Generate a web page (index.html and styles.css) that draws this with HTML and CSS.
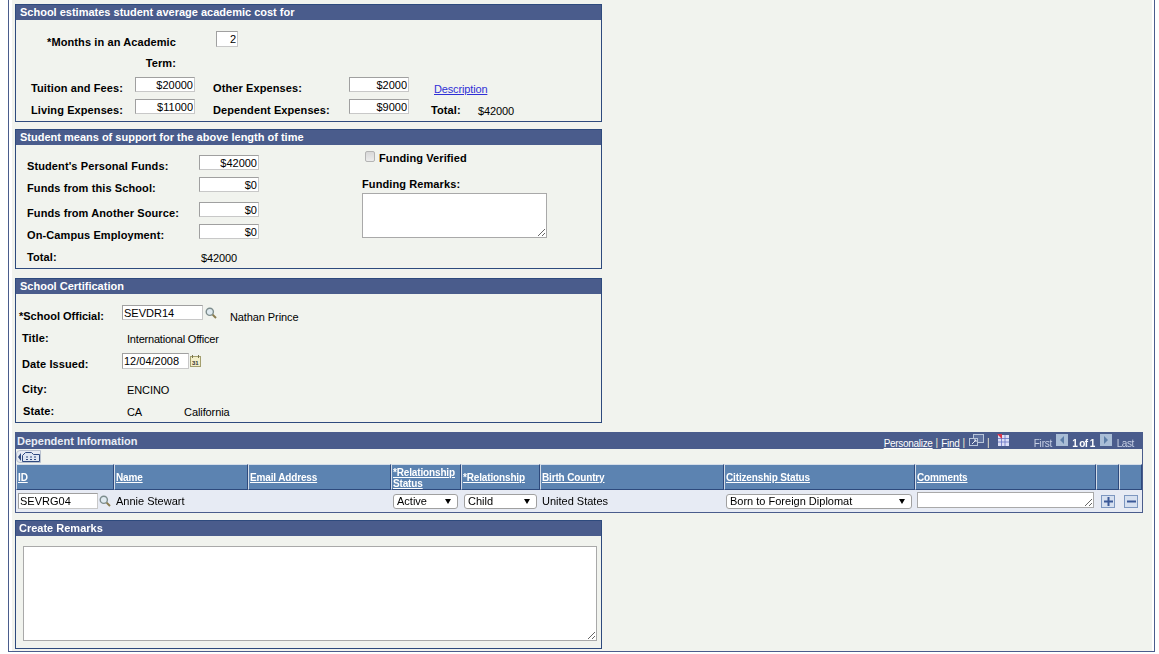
FILE: index.html
```html
<!DOCTYPE html>
<html lang="en">
<head>
<meta charset="utf-8">
<title>School Certification</title>
<link rel="stylesheet" href="styles.css">
</head>
<body>
<div class="frame">
  <section class="panel p1">
    <h2 class="panel-title">School estimates student average academic cost for</h2>
    <div class="form form-cost">
      <label class="lbl months">*Months in an Academic Term:</label>
      <input class="num months-in" value="2">
      <label class="lbl c1 r2">Tuition and Fees:</label>
      <input class="num c2 r2" value="$20000">
      <label class="lbl c4 r2">Other Expenses:</label>
      <input class="num c5 r2" value="$2000">
      <a class="desc" href="#">Description</a>
      <label class="lbl c1 r3">Living Expenses:</label>
      <input class="num c2 r3" value="$11000">
      <label class="lbl c4 r3">Dependent Expenses:</label>
      <input class="num c5 r3" value="$9000">
      <label class="lbl total-l">Total:</label>
      <span class="val total-v">$42000</span>
    </div>
  </section>

  <section class="panel p2">
    <h2 class="panel-title">Student means of support for the above length of time</h2>
    <div class="form form-support">
      <label class="lbl">Student's Personal Funds:</label>
      <input class="num" value="$42000">
      <div class="funding">
        <div class="verified"><input type="checkbox" class="check" disabled><span class="lbl">Funding Verified</span></div>
        <label class="lbl remarks-l">Funding Remarks:</label>
        <textarea class="remarks"></textarea>
      </div>
      <label class="lbl">Funds from this School:</label>
      <input class="num" value="$0">
      <label class="lbl">Funds from Another Source:</label>
      <input class="num" value="$0">
      <label class="lbl">On-Campus Employment:</label>
      <input class="num" value="$0">
      <label class="lbl">Total:</label>
      <span class="val sup-total">$42000</span>
    </div>
  </section>

  <section class="panel p3">
    <h2 class="panel-title">School Certification</h2>
    <div class="form form-cert">
      <label class="lbl off">*School Official:</label>
      <div class="fld">
        <input class="txt official" value="SEVDR14">
        <svg class="lookup" viewBox="0 0 12 12"><circle cx="4.800" cy="4.800" r="3.600" fill="#dfeaf0" stroke="#7d8d8d" stroke-width="1.400"/><path d="M7.600 7.600l3.400 3.400" stroke="#8a7d50" stroke-width="2"/></svg>
        <span class="val nm">Nathan Prince</span>
      </div>
      <label class="lbl in title-l">Title:</label>
      <span class="val v title-v">International Officer</span>
      <label class="lbl in date-l">Date Issued:</label>
      <div class="fld">
        <input class="txt date" value="12/04/2008">
        <svg class="cal" viewBox="0 0 11 12"><rect x=".5" y="1.500" width="10" height="10" fill="#f3efc9" stroke="#a49f6e"/><path d="M2.500 0v3M8.500 0v3" stroke="#77734c"/><text x="2" y="9.500" class="cal-t">31</text></svg>
      </div>
      <label class="lbl in">City:</label>
      <span class="val v">ENCINO</span>
      <label class="lbl st">State:</label>
      <span class="val v">CA<span class="state">California</span></span>
    </div>
  </section>

  <section class="dep">
    <div class="dep-title">
      <h2>Dependent Information</h2>
      <div class="dep-tools">
        <a href="#">Personalize</a><span class="sep">|</span><a href="#">Find</a><span class="sep">|</span>
        <svg class="ic-win" viewBox="0 0 15 13"><rect x="4.500" y=".5" width="10" height="8" fill="#5f729f" stroke="#b9c6da"/><rect x=".5" y="4.500" width="8" height="7" fill="#4a5c8c" stroke="#b9c6da"/><path d="M3 10l4-4M5 6h2v2" stroke="#e8edf5" fill="none"/></svg>
        <span class="sep">|</span>
        <svg class="ic-grid" viewBox="0 0 12 12"><rect x="1" y="1" width="11" height="11" fill="#dcdff6"/><path d="M1 4.500h11M1 8h11M4.500 1v11M8 1v11" stroke="#6671c4" stroke-width=".8"/><path d="M0 0h5v5z" fill="#d8344a"/></svg>
        <span class="first">First</span>
        <span class="nav nav-a"><i class="tri-l"></i></span>
        <b>1 of 1</b>
        <span class="nav nav-b"><i class="tri-r"></i></span>
        <span class="last">Last</span>
      </div>
    </div>
    <div class="dep-bar">
      <span class="tab-btn"><i class="tri-k"></i><svg viewBox="0 0 18 10"><path d="M.5 9.500v-6l3-3h6l2 2h6v7z" fill="#dfe6f2" stroke="#2f4a80"/><path d="M4 5h2M8 5h2M12 5h2M4 7.500h2M8 7.500h2M12 7.500h2" stroke="#2f4a80"/></svg></span>
    </div>
    <table class="grid">
      <colgroup>
        <col class="w1"><col class="w2"><col class="w3"><col class="w4"><col class="w5"><col class="w6"><col class="w7"><col class="w8"><col class="w9"><col class="w10">
      </colgroup>
      <thead>
        <tr>
          <th><a href="#">ID</a></th>
          <th><a href="#">Name</a></th>
          <th><a href="#">Email Address</a></th>
          <th><a href="#">*Relationship Status</a></th>
          <th><a href="#">*Relationship</a></th>
          <th><a href="#">Birth Country</a></th>
          <th><a href="#">Citizenship Status</a></th>
          <th><a href="#">Comments</a></th>
          <th></th>
          <th></th>
        </tr>
      </thead>
      <tbody>
        <tr>
          <td><div class="fld"><input class="txt depid" value="SEVRG04"><svg class="lookup" viewBox="0 0 12 12"><circle cx="4.800" cy="4.800" r="3.600" fill="#dfeaf0" stroke="#7d8d8d" stroke-width="1.400"/><path d="M7.600 7.600l3.400 3.400" stroke="#8a7d50" stroke-width="2"/></svg></div></td>
          <td>Annie Stewart</td>
          <td></td>
          <td><div class="sel s1">Active<i class="tri-d"></i></div></td>
          <td><div class="sel s2">Child<i class="tri-d"></i></div></td>
          <td>United States</td>
          <td><div class="sel s3">Born to Foreign Diplomat<i class="tri-d"></i></div></td>
          <td><textarea class="cmt"></textarea></td>
          <td class="act"><span class="btn"><svg viewBox="0 0 9 9"><path d="M4.500 0v9M0 4.500h9" stroke="#3b5998" stroke-width="2"/></svg></span></td>
          <td class="act"><span class="btn"><svg viewBox="0 0 9 9"><path d="M0 4.500h9" stroke="#3b5998" stroke-width="2"/></svg></span></td>
        </tr>
      </tbody>
    </table>
  </section>

  <section class="panel p4">
    <h2 class="panel-title t4">Create Remarks</h2>
    <div class="rem-body"><textarea class="rem"></textarea></div>
  </section>
</div>
</body>
</html>
```
FILE: styles.css
```css
* { box-sizing: border-box; }
html, body { margin: 0; padding: 0; background: #fff; }
body { font-family: "Liberation Sans", Arial, sans-serif; font-size: 11px; color: #000; }
.frame { width: 1147px; height: 652px; margin-left: 8px; padding: 4px 0 0 6px; background: #f1f3ee; border: 1px solid #4a5c8c; border-top: 0; overflow: hidden; box-shadow: inset 3px 0 0 #fff, inset -2px 0 0 #fff; }
.panel { width: 587px; border: 1px solid #2e4a7d; }
.panel-title { margin: 0; height: 15px; padding-left: 4px; background: #4a5c8c; color: #fff; font-size: 11px; font-weight: bold; line-height: 15px; }
.p1 { height: 118px; }
.p2 { margin-top: 7px; height: 140px; }
.p3 { margin-top: 9px; height: 145px; }
.p4 { margin-top: 7px; height: 129px; }
.form { display: grid; }
.lbl { font-weight: bold; font-size: 11px; letter-spacing: .1px; color: #000; }
.val { font-size: 11px; letter-spacing: -.1px; color: #000; }
.num, .txt { height: 15px; padding: 0 1px; border: 1px solid; border-color: #a0a0a0 #c8c8c8 #c8c8c8 #a0a0a0; background: #fff; font: 11px "Liberation Sans", Arial, sans-serif; color: #000; border-radius: 0; outline: 0; }
.num { width: 60px; text-align: right; }
textarea { display: block; resize: both; border: 1px solid #a9a9a9; background: #fff; margin: 0; padding: 0; }

.form-cost { grid-template-columns: 104px 60px 18px 136px 60px 22px 47px 1fr; grid-template-rows: 46px 22px 15px; padding: 11px 0 0 15px; align-items: center; }
.months { grid-column: 1 / 3; grid-row: 1; align-self: start; justify-self: end; width: 130px; margin: 1px 19px 0 0; text-align: right; line-height: 21px; }
.months-in { grid-column: 3 / 5; grid-row: 1; align-self: start; margin-left: 21px; width: 22px; height: 16px; }
.c1 { grid-column: 1; } .c2 { grid-column: 2; } .c4 { grid-column: 4; } .c5 { grid-column: 5; }
.r2 { grid-row: 2; align-self: start; } .r3 { grid-row: 3; align-self: start; }
.lbl.r2, .lbl.r3 { margin-top: 5px; }
.desc { grid-column: 7 / 9; grid-row: 2; align-self: start; margin: 6px 0 0 3px; color: #2f2fd6; letter-spacing: -.15px; }
.total-l { grid-column: 7; grid-row: 3; align-self: start; margin-top: 5px; }
.total-v { grid-column: 8; grid-row: 3; align-self: start; margin-top: 6px; }

.form-support { grid-template-columns: 172px 60px 103px 1fr; grid-template-rows: 22px 25px 22px 22px 15px; padding: 10px 0 0 11px; }
.form-support > .lbl { grid-column: 1; margin-top: 5px; }
.form-support > .num { grid-column: 2; }
.sup-total { grid-column: 2; margin: 6px 0 0 2px; }
.funding { grid-column: 4; grid-row: 1 / 6; margin-top: -3px; display: flex; flex-direction: column; align-items: flex-start; }
.verified { display: flex; align-items: center; height: 12px; gap: 4px; padding-left: 3px; }
.check { appearance: none; width: 10px; height: 11px; margin: -3px 0 0; border: 1px solid #b4b4b4; border-radius: 2px; background: linear-gradient(#d8d8d8, #ececec); }
.remarks-l { margin-top: 13px; line-height: 14px; }
.remarks { width: 185px; height: 45px; margin-top: 2px; }

.form-cert { grid-template-columns: 103px 1fr; grid-template-rows: 26px 22px 27px 22px 22px; padding: 11px 0 0 3px; align-items: start; }
.fld { display: flex; align-items: flex-start; }
.off { margin-top: 5px; letter-spacing: 0; }
.in { margin: 3px 0 0 3px; }
.title-l { margin-top: 1px; }
.date-l { margin-top: 5px; }
.st { margin: 3px 0 0 4px; }
.v { margin: 4px 0 0 5px; }
.title-v { margin-top: 2px; letter-spacing: -.2px; }
.official { width: 81px; }
.lookup { width: 12px; height: 12px; margin: 2px 0 0 2px; flex: none; }
.nm { margin: 6px 0 0 13px; }
.date { width: 67px; height: 16px; }
.cal { width: 11px; height: 12px; margin: 2px 0 0 1px; }
.cal-t { font: bold 6px "Liberation Sans", Arial, sans-serif; fill: #333; }
.state { margin-left: 42px; }

.dep { width: 1128px; margin-top: 9px; height: 81px; border: 1px solid #4a5c8c; border-top: 0; }
.dep-title { height: 17px; background: #4a5c8c; color: #fff; display: flex; justify-content: space-between; padding-left: 1px; }
.dep-title h2 { margin: 0; font-size: 11px; font-weight: bold; line-height: 19px; color: #e8edf5; }
.dep-tools { display: flex; align-items: flex-start; font-size: 10px; line-height: 13px; padding-top: 5px; padding-right: 8px; color: #c7d0e4; }
.dep-tools a { color: #fff; letter-spacing: -.3px; }
.dep-tools .sep { margin: -1px 3px 0; color: #f2ead0; }
.dep-tools b { color: #fff; margin: 0 5px 0 4px; letter-spacing: -.6px; }
.ic-win { width: 15px; height: 13px; margin: -3px 0 0 1px; }
.ic-grid { width: 12px; height: 12px; margin: -3px 0 0 4px; }
.first { margin-left: 25px; letter-spacing: -.2px; }
.last { margin-left: 5px; letter-spacing: -.4px; }
.nav { width: 12px; height: 12px; margin: -3px 0 0 4px; background: #a9bdd6; display: flex; align-items: center; justify-content: center; }
.nav-b { margin-left: 0; }
.tri-l, .tri-r, .tri-k { width: 0; height: 0; border: 4px solid transparent; }
.tri-l { border-right-color: #5d7ea8; border-left-width: 0; }
.tri-r { border-left-color: #5d7ea8; border-right-width: 0; }
.dep-bar { height: 15px; display: flex; align-items: center; }
.tab-btn { display: flex; align-items: center; width: 25px; height: 13px; background: #e6eaf2; border: 1px solid #b8c0ce; border-radius: 4px 0 0 4px; }
.tri-k { border-right-color: #2f4a80; border-width: 4px 3px 4px 0; margin: 0 1px 0 1px; }
.tab-btn svg { width: 18px; height: 10px; }

.grid { border-collapse: separate; border-spacing: 0; table-layout: fixed; width: 1126px; }
.w1 { width: 98px; } .w2 { width: 134px; } .w3 { width: 143px; } .w4 { width: 70px; } .w5 { width: 79px; }
.w6 { width: 184px; } .w7 { width: 191px; } .w8 { width: 181px; } .w9 { width: 23px; } .w10 { width: 23px; }
.grid th { height: 26px; padding: 1px 0 0 1px; background: #5c83b1; border-left: 1px solid #d5dde8; border-top: 1px solid #d5dde8; border-bottom: 1px solid #2e4a7d; border-right: 1px solid #2e4a7d; text-align: left; font-size: 10px; letter-spacing: -.15px; line-height: 11px; font-weight: bold; }
.grid th a { color: #fff; }
.grid td { height: 22px; padding: 0 0 0 2px; background: #e7ebf4; font-size: 11px; vertical-align: middle; }
.depid { width: 80px; height: 16px; }
.grid .lookup { margin: 2px 0 0 1px; }
.sel { position: relative; height: 15px; border: 1px solid #a0a0a0; border-radius: 3px; background: #fff; padding-left: 3px; line-height: 13px; font-size: 11px; }
.s1 { width: 65px; } .s2 { width: 73px; margin-left: 1px; } .s3 { width: 186px; }
.tri-d { position: absolute; right: 6px; top: 4px; width: 0; height: 0; border: 3px solid transparent; border-top: 5px solid #000; border-bottom: 0; }
.cmt { width: 177px; height: 16px; margin: 0 0 2px; }
.grid td.act { padding-left: 5px; }
.btn { display: flex; align-items: center; justify-content: center; width: 14px; height: 13px; border: 1px solid #7d97c0; background: #d6e0f0; }
.btn svg { width: 9px; height: 9px; }

.t4 { padding-left: 3px; }
.rem-body { padding: 10px 0 0 7px; }
.rem { width: 574px; height: 95px; }
```
